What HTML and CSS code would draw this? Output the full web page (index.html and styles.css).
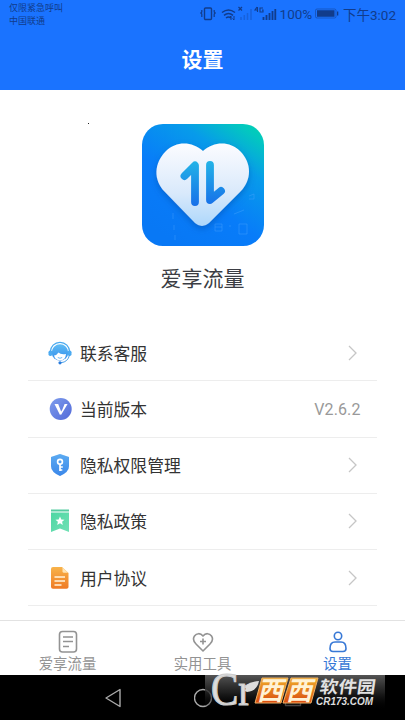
FILE: index.html
```html
<!DOCTYPE html>
<html lang="zh-CN">
<head>
<meta charset="utf-8">
<title>设置</title>
<link rel="stylesheet" href="styles.css">
</head>
<body>
<div class="screen">
  <header class="top">
    <div class="status">
      <div class="carrier"><span>仅限紧急呼叫</span><span>中国联通</span></div>
      <svg class="signals" width="78" height="20" viewBox="0 0 78 20" fill="none" stroke="currentColor">
        <rect x="4.5" y="4" width="7" height="11.500" rx="1" stroke-width="1.400"/>
        <path d="M1.800 6v2l-1 1 1 1v3M14.200 6v2l1 1-1 1v3" stroke-width="1.200"/>
        <path d="M22 8.500q6.500-5 13 0M24 11.300q4.500-3.500 9 0M26 14q2.500-2 5 0" stroke-width="1.500"/>
        <path d="M31 16v-4m-1.500 1.500L31 12M34 12v4m-1.500-1.500L34 16" stroke-width="1"/>
        <path d="M38.500 3l3.500 3.500M42 3l-3.500 3.500" stroke-width="1.200"/>
        <path d="M41 16v-3M44.300 16v-5M47.500 16V9M51 16V5" stroke-width="1.500" opacity=".3"/>
        <path d="M57 3l-2 3h3M57.500 3v5M63 4h-3v4h3V6h-1" stroke-width="1.100"/>
        <path d="M63.500 16v-3M66.500 16v-5M69.500 16V9M72.500 16V7M75.300 16V5" stroke-width="1.800"/>
      </svg>
      <span class="percent">100%</span>
      <svg class="battery" width="24" height="12" viewBox="0 0 24 12">
        <rect x=".5" y="1" width="20.500" height="9" rx="1.500" fill="none" stroke="currentColor" stroke-opacity=".5"/>
        <path d="M2 2.200h17.500v6.600H2zM22 3.500h1.300v4H22z" fill="currentColor"/>
      </svg>
      <span class="clock">下午3:02</span>
    </div>
    <h1>设置</h1>
  </header>

  <main>
    <section class="brand">
      <i class="speck"></i>
      <svg width="122" height="122" viewBox="0 0 122 122">
        <defs>
          <linearGradient id="tile" x1="1" y1="0" x2=".3" y2="1"><stop stop-color="#00d5ad"/><stop offset=".1" stop-color="#03c7c0"/><stop offset=".32" stop-color="#079bea"/><stop offset=".65" stop-color="#087cf9"/><stop offset="1" stop-color="#0878f5"/></linearGradient>
          <linearGradient id="heart" x1="0" y1="0" x2="0" y2="1"><stop stop-color="#fcfcff"/><stop offset=".6" stop-color="#d9e9fb"/><stop offset="1" stop-color="#add7fb"/></linearGradient>
          <linearGradient id="arrow" gradientUnits="userSpaceOnUse" x1="0" y1="38" x2="0" y2="82"><stop stop-color="#23b2e7"/><stop offset="1" stop-color="#176fe9"/></linearGradient>
          <filter id="shade" x="-20%" y="-20%" width="140%" height="150%"><feDropShadow dx="0" dy="3" stdDeviation="3" flood-color="#064dac" flood-opacity=".5"/></filter>
        </defs>
        <rect width="122" height="122" rx="21" fill="url(#tile)"/>
        <g stroke="#4da7ff" fill="none" opacity=".4"><path d="M73 100h7v7h-7zM73 103h7M97 100h8v10h-8zM31 89v6M32 101v5M33 111v5M107 72l5-2v5h-5M92 90l10-4M87 102h2"/></g>
        <path d="M61 27C50 17 34 17 24 27C12 39 11 56 23 68L53 99Q60 105 67 99L98 68C110 56 110 39 98 27C88 17 72 17 61 27Z" fill="url(#heart)" filter="url(#shade)"/>
        <path d="M42.500 52L53 41.500V78" fill="none" stroke="url(#arrow)" stroke-width="7.800" stroke-linecap="round" stroke-linejoin="round"/>
        <path d="M68 41V76L79 67" fill="none" stroke="url(#arrow)" stroke-width="7.800" stroke-linecap="round" stroke-linejoin="round"/>
      </svg>
      <h2>爱享流量</h2>
    </section>

    <ul class="list">
      <li>
        <svg class="icon" viewBox="0 0 24 24"><defs><linearGradient id="b" x1="0" y1="0" x2="0" y2="1"><stop stop-color="#60bdf5"/><stop offset="1" stop-color="#328bea"/></linearGradient></defs><path d="M2.300 11A9.700 9.700 0 0 1 21.700 11" fill="none" stroke="#48a9ef" stroke-width="1.300"/><circle cx="12" cy="11.500" r="8.300" fill="url(#b)"/><path d="M6 14.500Q9 14 10.500 11.500Q12.500 13.800 18 13Q17.500 19.500 12 19.500Q7 19 6 14.500" fill="#fff"/><rect x=".5" y="9.500" width="3.800" height="5.500" rx="1.700" fill="#4baaf1"/><rect x="19.700" y="9.500" width="3.800" height="5.500" rx="1.700" fill="#4baaf1"/><path d="M21.500 14Q20 21 13 21.700" fill="none" stroke="#469fe9"/><circle cx="12" cy="21.800" r="1.600" fill="#287bdc"/><path d="M9.800 16.500q2.200 1.500 4.400 0" fill="none" stroke="#4aa6ef" stroke-width=".8"/></svg>
        <span>联系客服</span><svg class="chevron" viewBox="0 0 10 16"><path d="M1 1l7 7-7 7"/></svg>
      </li>
      <li>
        <svg class="icon" viewBox="0 0 24 24"><defs><linearGradient id="v" x1="0" y1="0" x2="1" y2="1"><stop stop-color="#7e9ded"/><stop offset="1" stop-color="#5269d8"/></linearGradient></defs><circle cx="12.700" cy="12" r="11" fill="url(#v)"/><path d="M6.500 7h3.700l3.300 8.500-1.500 2.500zM14.400 12.500l2.200-5.500h3L13 18l-1-1.500z" fill="#fff"/></svg>
        <span>当前版本</span><em>V2.6.2</em>
      </li>
      <li>
        <svg class="icon" viewBox="0 0 24 24"><path d="M12 1L21 4V13Q21 19 12 23Q3 19 3 13V4Z" fill="url(#b)"/><path d="M12 1L21 4V13Q21 19 12 23Q3 19 3 13V4Z" fill="#547ee9" opacity=".28"/><g fill="none" stroke="#fff" stroke-width="1.700"><circle cx="12" cy="8.800" r="2.400"/><path d="M12 11v7M12 14h2.800M12 17h2.300"/></g></svg>
        <span>隐私权限管理</span><svg class="chevron" viewBox="0 0 10 16"><path d="M1 1l7 7-7 7"/></svg>
      </li>
      <li>
        <svg class="icon" viewBox="0 0 24 24"><defs><linearGradient id="g" x1="0" y1="0" x2="1" y2="1"><stop stop-color="#4dd6a3"/><stop offset="1" stop-color="#72e1b5"/></linearGradient></defs><path d="M3 .5h18v2H3z" fill="#54cca1"/><path d="M3 3.500h18v19.500L12 19.500 3 23z" fill="url(#g)"/><path d="M12 7.500l1.300 2.900 3.200.3-2.400 2.100.7 3.200-2.800-1.700L9.200 16l.7-3.200-2.400-2.100 3.200-.3z" fill="#fff"/></svg>
        <span>隐私政策</span><svg class="chevron" viewBox="0 0 10 16"><path d="M1 1l7 7-7 7"/></svg>
      </li>
      <li>
        <svg class="icon" viewBox="0 0 24 24"><defs><linearGradient id="o" x1="0" y1="0" x2="0" y2="1"><stop stop-color="#f8b34a"/><stop offset="1" stop-color="#ef7b25"/></linearGradient></defs><path d="M5 1h9l6.500 6v14q0 1.700-2 1.700H5q-2 0-2-2V3q0-2 2-2z" fill="url(#o)"/><path d="M14.500 1.500L20 6.800h-4q-1.500 0-1.500-1.500z" fill="#ffe5b6"/><path d="M6.500 11h10.500M6.500 15h10.500M6.500 19h7" stroke="#fff3dc" stroke-width="1.400"/></svg>
        <span>用户协议</span><svg class="chevron" viewBox="0 0 10 16"><path d="M1 1l7 7-7 7"/></svg>
      </li>
    </ul>
  </main>

  <nav class="tabs">
    <a><svg viewBox="0 0 24 24"><rect x="3.500" y="1.500" width="17" height="20.500" rx="3"/><path d="M7 7h10M7 11.500h10M7 16.500h6"/></svg><span>爱享流量</span></a>
    <a><svg viewBox="0 0 24 24"><path d="M12 6C9.500 2.800 5.500 3 3.500 6C1.500 9 2.500 11.500 5 14L12 21L19 14C21.500 11.500 22.500 9 20.500 6C18.500 3 14.500 2.800 12 6zM12 8.500v6M9 11.500h6"/></svg><span>实用工具</span></a>
    <a class="active"><svg viewBox="0 0 24 24"><circle cx="12" cy="6" r="3.700"/><path d="M7 21.500Q4 21.500 4 18.500Q4 12 9 12H15Q20 12 20 18.500Q20 21.500 17 21.500Z"/></svg><span>设置</span></a>
  </nav>
  <footer class="system">
    <svg viewBox="0 0 18 22"><path d="M16 2.500v17L2 11z"/></svg>
    <svg viewBox="0 0 18 22"><circle cx="9" cy="11" r="8.500"/></svg>
    <svg class="dim" viewBox="0 0 18 22"><rect x="1.500" y="3.500" width="15" height="15"/></svg>
  </footer>

  <div class="mark">
    <svg width="200" height="50" viewBox="0 0 200 50">
      <defs>
        <linearGradient id="haze" x1="0" y1="0" x2="0" y2="1"><stop stop-color="#555"/><stop offset=".5" stop-color="#262626" stop-opacity=".8"/><stop offset="1" stop-color="#000" stop-opacity="0"/></linearGradient>
        <linearGradient id="red" x1="0" y1="0" x2="0" y2="1"><stop stop-color="#f0ae2c"/><stop offset="1" stop-color="#d94a0e"/></linearGradient>
      </defs>
      <path d="M5 7H185V42H5z" fill="url(#haze)"/>
      <text class="letter" x="11" y="37" font-size="46" textLength="41" lengthAdjust="spacingAndGlyphs">Cr</text>
      <path d="M45 23Q45 14 59 13Q57 23 47 24z" fill="#ddd"/>
      <g fill="url(#red)" stroke="#eeb066"><path d="M62 10H88L81 35H55z"/><path d="M91 10H118L111 35H83z"/></g>
      <g class="tiles"><text transform="translate(57 32) skewX(-14)">西</text><text transform="translate(86 32) skewX(-14)">西</text></g>
      <text class="soft" transform="translate(119 24.500) skewX(-8)" textLength="56" lengthAdjust="spacingAndGlyphs">软件园</text>
      <text class="domain" x="116" y="36.500" textLength="57" lengthAdjust="spacingAndGlyphs">CR173.COM</text>
    </svg>
  </div>
</div>
</body>
</html>
```
FILE: styles.css
```css
* { box-sizing: border-box; }
body { margin: 0; font-family: Roboto, "Noto Sans CJK SC", sans-serif; background: #fff; }
h1, h2, ul { margin: 0; padding: 0; }
svg { display: block; flex: none; }
.screen { position: relative; width: 405px; height: 720px; overflow: hidden; display: flex; flex-direction: column; }
.top { height: 90px; background: #1a73ff; }
.status { height: 28px; display: flex; align-items: center; padding: 0 9px; color: #113c8b; }
.carrier { display: flex; flex-direction: column; width: 193px; font-size: 9px; line-height: 13px; padding-top: 2px; }
.signals { margin: -1px 0 0 1.5px; }
.percent { width: 35px; margin-left: 1.5px; font-size: 13.5px; }
.battery { margin-left: 1px; }
.clock { margin-left: 4px; font-size: 13.5px; white-space: nowrap; }
h1 { height: 62px; color: #fff; font-size: 21px; line-height: 64px; text-align: center; font-weight: 700; }
main { height: 530px; display: flex; flex-direction: column; }
.brand { position: relative; height: 235px; padding-top: 33.5px; display: flex; flex-direction: column; align-items: center; }
.brand svg { margin-right: 0; }
.speck { position: absolute; left: 88px; top: 33px; width: 1px; height: 1px; background: #222; }
h2 { margin-top: 17px; color: #3b3d43; font-size: 21px; line-height: 32px; font-weight: 400; }
.list { list-style: none; margin: 0 28px; }
.list li { height: 56.25px; display: flex; align-items: center; border-bottom: 1px solid #ededed; padding: 0 19px 0 20px; color: #333; font-size: 16.8px; }
.icon { width: 24px; height: 24px; margin-right: 8px; }
.list span { flex: 1; }
.list em { color: #999; font-style: normal; font-size: 16px; letter-spacing: .1px; margin-right: -2.5px; padding-top: 1px; }
.chevron { width: 10px; height: 16px; fill: none; stroke: #c6c6c6; stroke-width: 1.3; }
.tabs { height: 55px; border-top: 1px solid #e2e2e2; display: flex; background: #fff; }
.tabs a { flex: 1; display: flex; flex-direction: column; align-items: center; color: #939393; font-size: 14.4px; line-height: 22px; padding-top: 9px; }
.tabs svg { width: 24px; height: 24px; fill: none; stroke: currentColor; stroke-width: 1.6; stroke-linejoin: round; }
.tabs .active { color: #3778d6; }
.system { height: 45px; background: #000; display: flex; justify-content: center; gap: 72px; align-items: center; }
.system svg { width: 18px; height: 22px; fill: none; stroke: #aaa; stroke-width: 1.4; stroke-linejoin: round; }
.system .dim { opacity: .5; }
.mark { position: absolute; left: 200px; top: 668px; }
.mark svg { overflow: visible; }
.letter { font-family: "Liberation Serif", serif; fill: #ddd; stroke: #ccc; stroke-width: 1.2px; }
.tiles { font: 700 26px "Noto Sans CJK SC", sans-serif; fill: #fff2d5; }
.soft { font: 700 17px "Noto Sans CJK SC", sans-serif; fill: #e2e2e2; }
.domain { font: italic 700 10px "Liberation Sans", sans-serif; fill: #ddd; }
```
